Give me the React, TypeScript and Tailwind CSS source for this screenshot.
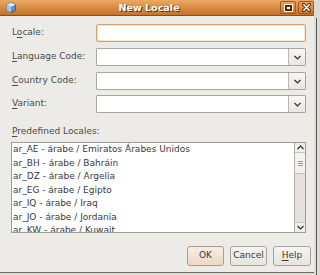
import React from "react";

const font = { fontFamily: '"DejaVu Sans", "Liberation Sans", sans-serif' };

function U({ children }: { children: React.ReactNode }) {
  return <span className="underline underline-offset-[2px] decoration-[1px]">{children}</span>;
}

function Chevron({ up = false }: { up?: boolean }) {
  return (
    <svg width="7" height="5" viewBox="0 0 7 5" className={up ? "rotate-180" : ""}>
      <path d="M0.5 1 L3.5 4 L6.5 1" fill="none" stroke="#2e2e2e" strokeWidth="1.2" />
    </svg>
  );
}

function Combo() {
  return (
    <div className="flex h-[18px] w-[210px] border border-[#a9a59f] bg-white rounded-[1px]">
      <div className="flex-1" />
      <div className="w-[17px] h-full border-l border-[#b9b5ae] bg-gradient-to-b from-[#f8f7f5] to-[#e9e6e1] flex items-center justify-center">
        <Chevron />
      </div>
    </div>
  );
}

const items = [
  "ar_AE - árabe / Emiratos Árabes Unidos",
  "ar_BH - árabe / Bahráin",
  "ar_DZ - árabe / Argelia",
  "ar_EG - árabe / Egipto",
  "ar_IQ - árabe / Iraq",
  "ar_JO - árabe / Jordania",
  "ar_KW - árabe / Kuwait",
];

export default function App() {
  return (
    <div className="w-[320px] h-[275px] overflow-hidden flex bg-[#dcdad5]" style={font}>
      <div className="w-[314px] h-[273px] flex flex-col border-b border-[#6f6a62]">
        {/* title bar */}
        <div className="h-[16px] flex items-center bg-gradient-to-b from-[#ecaa66] via-[#d98a42] to-[#c8732a] border-b border-[#8c4d17]">
          <div className="w-[18px] flex justify-center pl-[3px]">
            <svg width="10" height="11" viewBox="0 0 10 11">
              <path d="M5 0.5 L9.5 2.8 L9.5 8.2 L5 10.5 L0.5 8.2 L0.5 2.8 Z" fill="#5d8fc9" stroke="#2d4f7a" strokeWidth="0.8" />
              <path d="M0.5 2.8 L5 5 L9.5 2.8 L5 0.5 Z" fill="#d7e6f6" />
              <path d="M5 5 L5 10.5 L0.5 8.2 L0.5 2.8 Z" fill="#a9c6e8" />
            </svg>
          </div>
          <div className="flex-1 text-center text-white font-bold text-[9.5px] leading-[14px] [text-shadow:1px_1px_0_#5a3210]">
            New Locale
          </div>
          <div className="flex gap-[2px] items-center pr-0">
            <div className="w-[16px] h-[13px] rounded-[2px] border border-[#9a5a20] bg-gradient-to-b from-[#e8a15c] to-[#cc7832] flex items-center justify-center">
              <div className="w-[7px] h-[6px] border-[2px] border-[#5a2a08] bg-white outline outline-1 outline-[#fff3e6]" />
            </div>
            <div className="w-[16px] h-[13px] rounded-[2px] border border-[#9a5a20] bg-gradient-to-b from-[#e8a15c] to-[#cc7832] flex items-center justify-center">
              <svg width="9" height="9" viewBox="0 0 9 9">
                <path d="M1.5 1.5 L7.5 7.5 M7.5 1.5 L1.5 7.5" stroke="#5a2a08" strokeWidth="3.2" strokeLinecap="round" />
                <path d="M1.8 1.8 L7.2 7.2 M7.2 1.8 L1.8 7.2" stroke="#ffffff" strokeWidth="1.6" strokeLinecap="round" />
              </svg>
            </div>
          </div>
        </div>

        {/* body */}
        <div className="flex-1 bg-[#edebe8] pl-[11px] pr-[8px] pt-[8px] flex flex-col text-[9px] text-[#4a4a4a]">
          <div className="flex items-center h-[18px]">
            <div className="w-[85px] pl-[1px]">L<U>o</U>cale:</div>
            <div className="w-[210px] h-[18px] border border-[#d9a06b] bg-white rounded-[2px] shadow-[inset_0_0_0_1px_#f7e3cf]" />
          </div>
          <div className="flex items-center h-[18px] mt-[6px]">
            <div className="w-[85px] pl-[1px]"><U>L</U>anguage Code:</div>
            <Combo />
          </div>
          <div className="flex items-center h-[18px] mt-[6px]">
            <div className="w-[85px] pl-[1px]"><U>C</U>ountry Code:</div>
            <Combo />
          </div>
          <div className="flex items-center h-[18px] mt-[5px]">
            <div className="w-[85px] pl-[1px]"><U>V</U>ariant:</div>
            <Combo />
          </div>

          <div className="mt-[12px] h-[12px] leading-[12px] pl-[1px]"><U>P</U>redefined Locales:</div>

          <div className="mt-[5px] w-[295px] h-[91px] border border-[#a09c95] bg-white flex">
            <div className="flex-1 overflow-hidden pl-[1px] text-[#3a3a3a]">
              {items.map((t) => (
                <div key={t} className="h-[13.5px] leading-[13.5px] whitespace-nowrap">{t}</div>
              ))}
            </div>
            <div className="w-[11px] h-full border-l border-[#b5b1aa] bg-[#e4e1dc] flex flex-col">
              <div className="h-[10px] border-b border-[#c9c5be] bg-[#f1efec] flex items-center justify-center">
                <Chevron up />
              </div>
              <div className="h-[21px] mx-[0px] bg-[#f4f2ef] border-b border-[#c5c1ba] flex flex-col items-center justify-center gap-[1px]">
                <div className="w-[5px] h-px bg-[#9d9992]" />
                <div className="w-[5px] h-px bg-[#9d9992]" />
                <div className="w-[5px] h-px bg-[#9d9992]" />
              </div>
              <div className="flex-1" />
              <div className="h-[10px] border-t border-[#c9c5be] bg-[#f1efec] flex items-center justify-center">
                <Chevron />
              </div>
            </div>
          </div>

          <div className="mt-[13px] flex justify-end gap-[6px] -mr-[5px] text-[9px]">
            <div className="w-[37px] h-[20px] rounded-[3px] border border-[#b39a86] bg-gradient-to-b from-[#f8ede3] to-[#ecd8c4] flex items-center justify-center text-[#3a3a3a]">OK</div>
            <div className="w-[37px] h-[20px] rounded-[3px] border border-[#a8a39b] bg-gradient-to-b from-[#f6f5f3] to-[#e6e3de] flex items-center justify-center text-[#3a3a3a]">Cancel</div>
            <div className="w-[38px] h-[20px] rounded-[3px] border border-[#a8a39b] bg-gradient-to-b from-[#f6f5f3] to-[#e6e3de] flex items-center justify-center text-[#3a3a3a]"><U>H</U>elp</div>
          </div>
        </div>
      </div>
      <div className="flex-1 flex">
        <div className="w-[2px]" />
        <div className="w-px h-full bg-[#5d5a55] mt-[18px]" />
      </div>
    </div>
  );
}
